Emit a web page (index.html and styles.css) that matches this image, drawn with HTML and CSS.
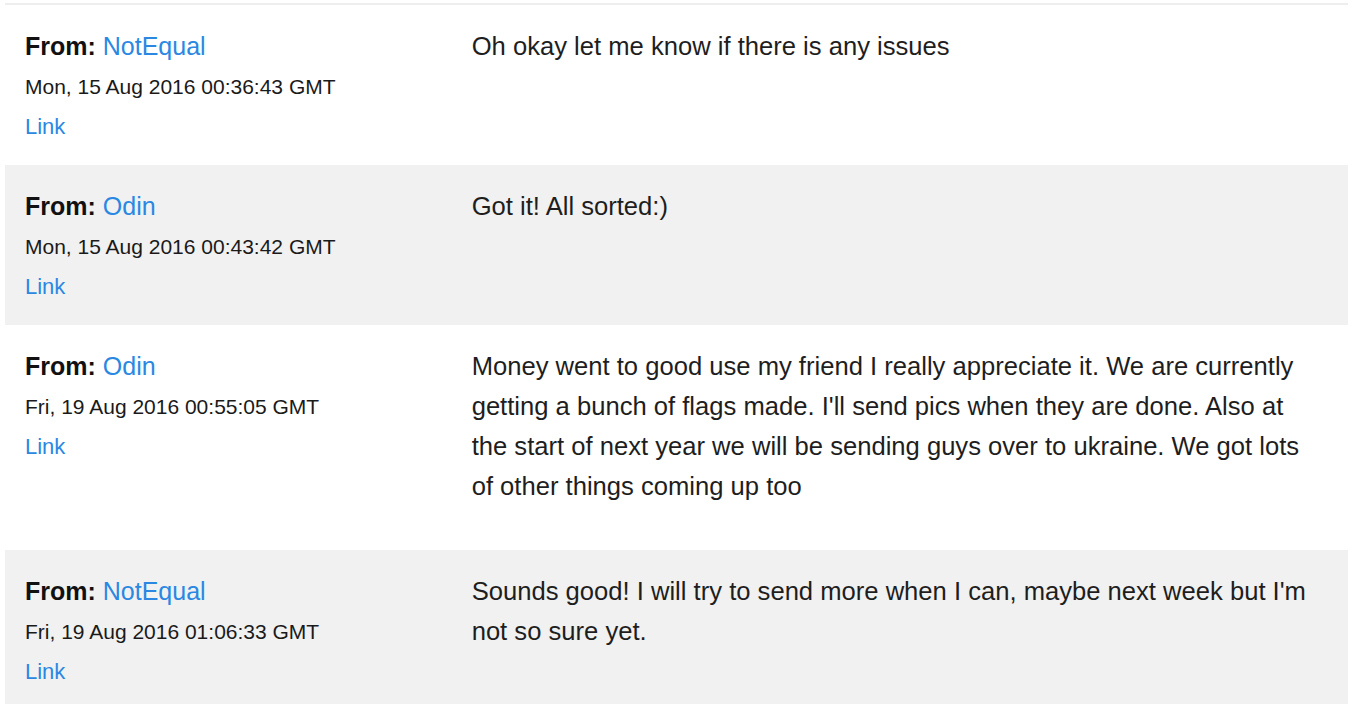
FILE: index.html
```html
<!DOCTYPE html>
<html>
<head>
<meta charset="utf-8">
<title>Messages</title>
<link rel="stylesheet" href="styles.css">
</head>
<body>
<div class="thread">
  <div class="msg">
    <div class="meta">
      <div class="from"><strong>From:</strong> <a href="#">NotEqual</a></div>
      <div class="date">Mon, 15 Aug 2016 00:36:43 GMT</div>
      <div class="permalink"><a href="#">Link</a></div>
    </div>
    <div class="body"><p>Oh okay let me know if there is any issues</p></div>
  </div>
  <div class="msg alt">
    <div class="meta">
      <div class="from"><strong>From:</strong> <a href="#">Odin</a></div>
      <div class="date">Mon, 15 Aug 2016 00:43:42 GMT</div>
      <div class="permalink"><a href="#">Link</a></div>
    </div>
    <div class="body"><p>Got it! All sorted:)</p></div>
  </div>
  <div class="msg">
    <div class="meta">
      <div class="from"><strong>From:</strong> <a href="#">Odin</a></div>
      <div class="date">Fri, 19 Aug 2016 00:55:05 GMT</div>
      <div class="permalink"><a href="#">Link</a></div>
    </div>
    <div class="body"><p>Money went to good use my friend I really appreciate it. We are currently getting a bunch of flags made. I'll send pics when they are done. Also at the start of next year we will be sending guys over to ukraine. We got lots of other things coming up too</p></div>
  </div>
  <div class="msg alt">
    <div class="meta">
      <div class="from"><strong>From:</strong> <a href="#">NotEqual</a></div>
      <div class="date">Fri, 19 Aug 2016 01:06:33 GMT</div>
      <div class="permalink"><a href="#">Link</a></div>
    </div>
    <div class="body"><p>Sounds good! I will try to send more when I can, maybe next week but I'm not so sure yet.</p></div>
  </div>
</div>
</body>
</html>
```

FILE: styles.css
```css
html, body {
  margin: 0;
  padding: 0;
  background: #ffffff;
}

body {
  font-family: "Liberation Sans", Arial, sans-serif;
  color: #222222;
}

.thread {
  margin: 3px 4px 0 5px;
  border-top: 2px solid #eeeeee;
}

.msg {
  display: grid;
  grid-template-columns: 1fr 2fr;
  background: #ffffff;
}

.msg.alt {
  background: #f1f1f1;
}

.meta,
.body {
  padding: 21px 20px 19px;
}

.body {
  padding-left: 19px;
}

.from {
  font-size: 25px;
  line-height: 40px;
  color: #111111;
}

.from strong {
  font-weight: bold;
}

a {
  color: #2a88e3;
  text-decoration: none;
}

.date {
  font-size: 21px;
  line-height: 42px;
  color: #1a1a1a;
}

.permalink {
  font-size: 22px;
  line-height: 38px;
}

.body p {
  margin: 0 0 25px;
  max-width: 846px;
  font-size: 25.6px;
  line-height: 40px;
  color: #1e1e1e;
}
```
